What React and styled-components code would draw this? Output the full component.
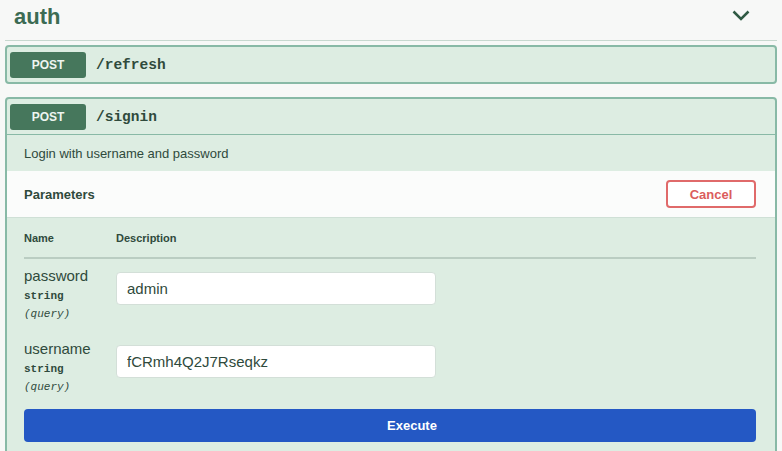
import React from "react";
import styled, { createGlobalStyle } from "styled-components";

const GlobalStyle = createGlobalStyle`
  html, body {
    margin: 0;
    padding: 0;
    background: #f7f8f7;
    font-family: "Liberation Sans", Arial, sans-serif;
  }
`;

const Page = styled.div`
  width: 782px;
  height: 451px;
  overflow: hidden;
  padding: 0 5px;
  box-sizing: border-box;
`;

const TagHeader = styled.div`
  display: flex;
  align-items: center;
  justify-content: space-between;
  height: 40px;
  padding: 0 27px 0 9px;
  border-bottom: 1px solid #c7d8cf;
  margin-bottom: 4px;
  h2 {
    margin: 0;
    font-size: 22px;
    font-weight: 700;
    color: #3c6b53;
    padding-bottom: 6px;
  }
  svg {
    margin-bottom: 9px;
  }
`;

const OpBlock = styled.div`
  border: 2px solid #88b9a6;
  border-radius: 4px;
  background: #ddede2;
  margin-bottom: ${(p) => p.$gap || 0}px;
`;

const Summary = styled.div`
  display: flex;
  align-items: center;
  gap: 10px;
  padding: 5px 3px 4px;
  border-bottom: ${(p) => (p.$open ? "1px solid #88b9a6" : "none")};
`;

const Method = styled.span`
  display: flex;
  align-items: center;
  justify-content: center;
  width: 76px;
  height: 26px;
  border-radius: 3px;
  background: #46775c;
  color: #eef5f0;
  font-size: 12px;
  font-weight: 700;
`;

const Path = styled.span`
  font-family: "Liberation Mono", "Courier New", monospace;
  font-weight: 700;
  font-size: 14.5px;
  color: #2f4a3c;
`;

const Description = styled.div`
  height: 36px;
  display: flex;
  align-items: center;
  padding-left: 17px;
  font-size: 13px;
  color: #2f4a3c;
`;

const SectionHeader = styled.div`
  height: 46px;
  display: flex;
  align-items: center;
  justify-content: space-between;
  padding: 0 19px 0 17px;
  background: #fbfcfb;
  border-bottom: 1px solid #cfe0d6;
  h4 {
    margin: 0;
    font-size: 13px;
    font-weight: 700;
    color: #2f4a3c;
  }
`;

const CancelButton = styled.button`
  width: 90px;
  height: 28px;
  border: 2px solid #e06a6a;
  border-radius: 4px;
  background: #fff;
  color: #db5c5c;
  font-family: "Liberation Sans", Arial, sans-serif;
  font-size: 13px;
  font-weight: 700;
`;

const Params = styled.div`
  padding: 0 19px 30px 17px;
`;

const TableHead = styled.div`
  display: grid;
  grid-template-columns: 92px 1fr;
  height: 38px;
  align-items: center;
  padding-top: 1px;
  border-bottom: 2px solid #bacdc2;
  font-size: 11px;
  font-weight: 700;
  color: #2f4a3c;
`;

const ParamRow = styled.div`
  display: grid;
  grid-template-columns: 92px 320px;
  align-items: start;
  padding-top: ${(p) => p.$top}px;
`;

const ParamName = styled.div`
  color: #2f4a3c;
  .name {
    font-size: 15px;
    line-height: 17px;
  }
  .type {
    margin-top: 6px;
    font-family: "Liberation Mono", "Courier New", monospace;
    font-size: 11px;
    font-weight: 700;
    line-height: 13px;
  }
  .in {
    margin-top: 5px;
    font-family: "Liberation Mono", "Courier New", monospace;
    font-size: 11px;
    font-style: italic;
    line-height: 13px;
  }
`;

const Input = styled.input`
  box-sizing: border-box;
  width: 320px;
  height: 33px;
  margin-top: ${(p) => p.$offset}px;
  padding: 0 10px;
  border: 1px solid #d3dfd8;
  border-radius: 4px;
  background: #fff;
  font-family: "Liberation Sans", Arial, sans-serif;
  font-size: 15px;
  color: #2f4a3c;
`;

const ExecuteButton = styled.button`
  display: block;
  width: 100%;
  height: 33px;
  margin-top: 15px;
  padding-left: 50px;
  border: none;
  border-radius: 4px;
  background: #2458c4;
  color: #fff;
  font-family: "Liberation Sans", Arial, sans-serif;
  font-size: 13px;
  font-weight: 700;
`;

const Chevron = () => (
  <svg width="18" height="11" viewBox="0 0 18 11" fill="none">
    <path d="M1.5 1.5 L9 9 L16.5 1.5" stroke="#2f5a44" strokeWidth="2.5" />
  </svg>
);

const params = [
  { name: "password", value: "admin", top: 8 },
  { name: "username", value: "fCRmh4Q2J7Rseqkz", top: 19 },
];

export default function App() {
  return (
    <Page>
      <GlobalStyle />
      <TagHeader>
        <h2>auth</h2>
        <Chevron />
      </TagHeader>

      <OpBlock $gap={13}>
        <Summary>
          <Method>POST</Method>
          <Path>/refresh</Path>
        </Summary>
      </OpBlock>

      <OpBlock>
        <Summary $open>
          <Method>POST</Method>
          <Path>/signin</Path>
        </Summary>
        <Description>Login with username and password</Description>
        <SectionHeader>
          <h4>Parameters</h4>
          <CancelButton>Cancel</CancelButton>
        </SectionHeader>
        <Params>
          <TableHead>
            <span>Name</span>
            <span>Description</span>
          </TableHead>
          {params.map((p) => (
            <ParamRow key={p.name} $top={p.top}>
              <ParamName>
                <div className="name">{p.name}</div>
                <div className="type">string</div>
                <div className="in">(query)</div>
              </ParamName>
              <Input $offset={5} defaultValue={p.value} />
            </ParamRow>
          ))}
          <ExecuteButton>Execute</ExecuteButton>
        </Params>
      </OpBlock>
    </Page>
  );
}
